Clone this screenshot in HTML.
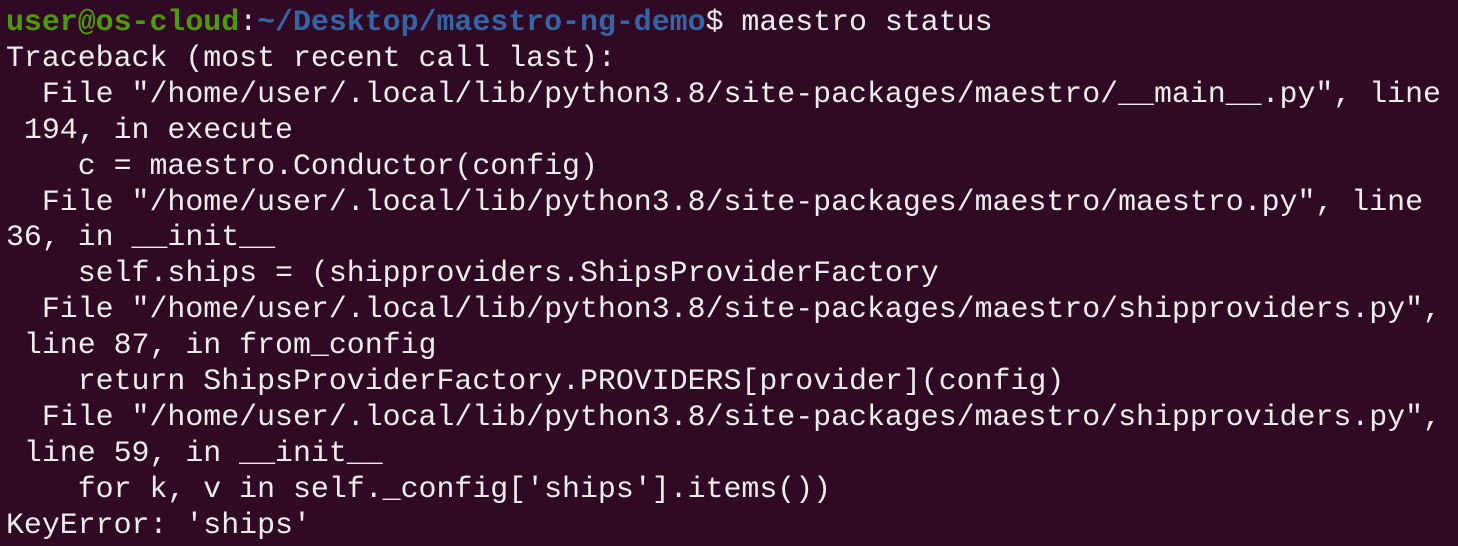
<!DOCTYPE html>
<html><head><meta charset="utf-8"><style>
html,body{margin:0;padding:0;background:#300a24;width:1458px;height:546px;overflow:hidden}
pre{position:absolute;left:6px;top:5px;margin:0;font-family:"Liberation Mono","DejaVu Sans Mono",monospace;font-size:29.9px;line-height:35.9px;color:#ededed;letter-spacing:0}
.g{color:#4e9a06;font-weight:bold}.b{color:#3465a4;font-weight:bold}
</style></head><body>
<pre><span class="g">user@os-cloud</span>:<span class="b">~/Desktop/maestro-ng-demo</span>$ maestro status
Traceback (most recent call last):
  File "/home/user/.local/lib/python3.8/site-packages/maestro/__main__.py", line
 194, in execute
    c = maestro.Conductor(config)
  File "/home/user/.local/lib/python3.8/site-packages/maestro/maestro.py", line
36, in __init__
    self.ships = (shipproviders.ShipsProviderFactory
  File "/home/user/.local/lib/python3.8/site-packages/maestro/shipproviders.py",
 line 87, in from_config
    return ShipsProviderFactory.PROVIDERS[provider](config)
  File "/home/user/.local/lib/python3.8/site-packages/maestro/shipproviders.py",
 line 59, in __init__
    for k, v in self._config['ships'].items())
KeyError: 'ships'</pre>
</body></html>
